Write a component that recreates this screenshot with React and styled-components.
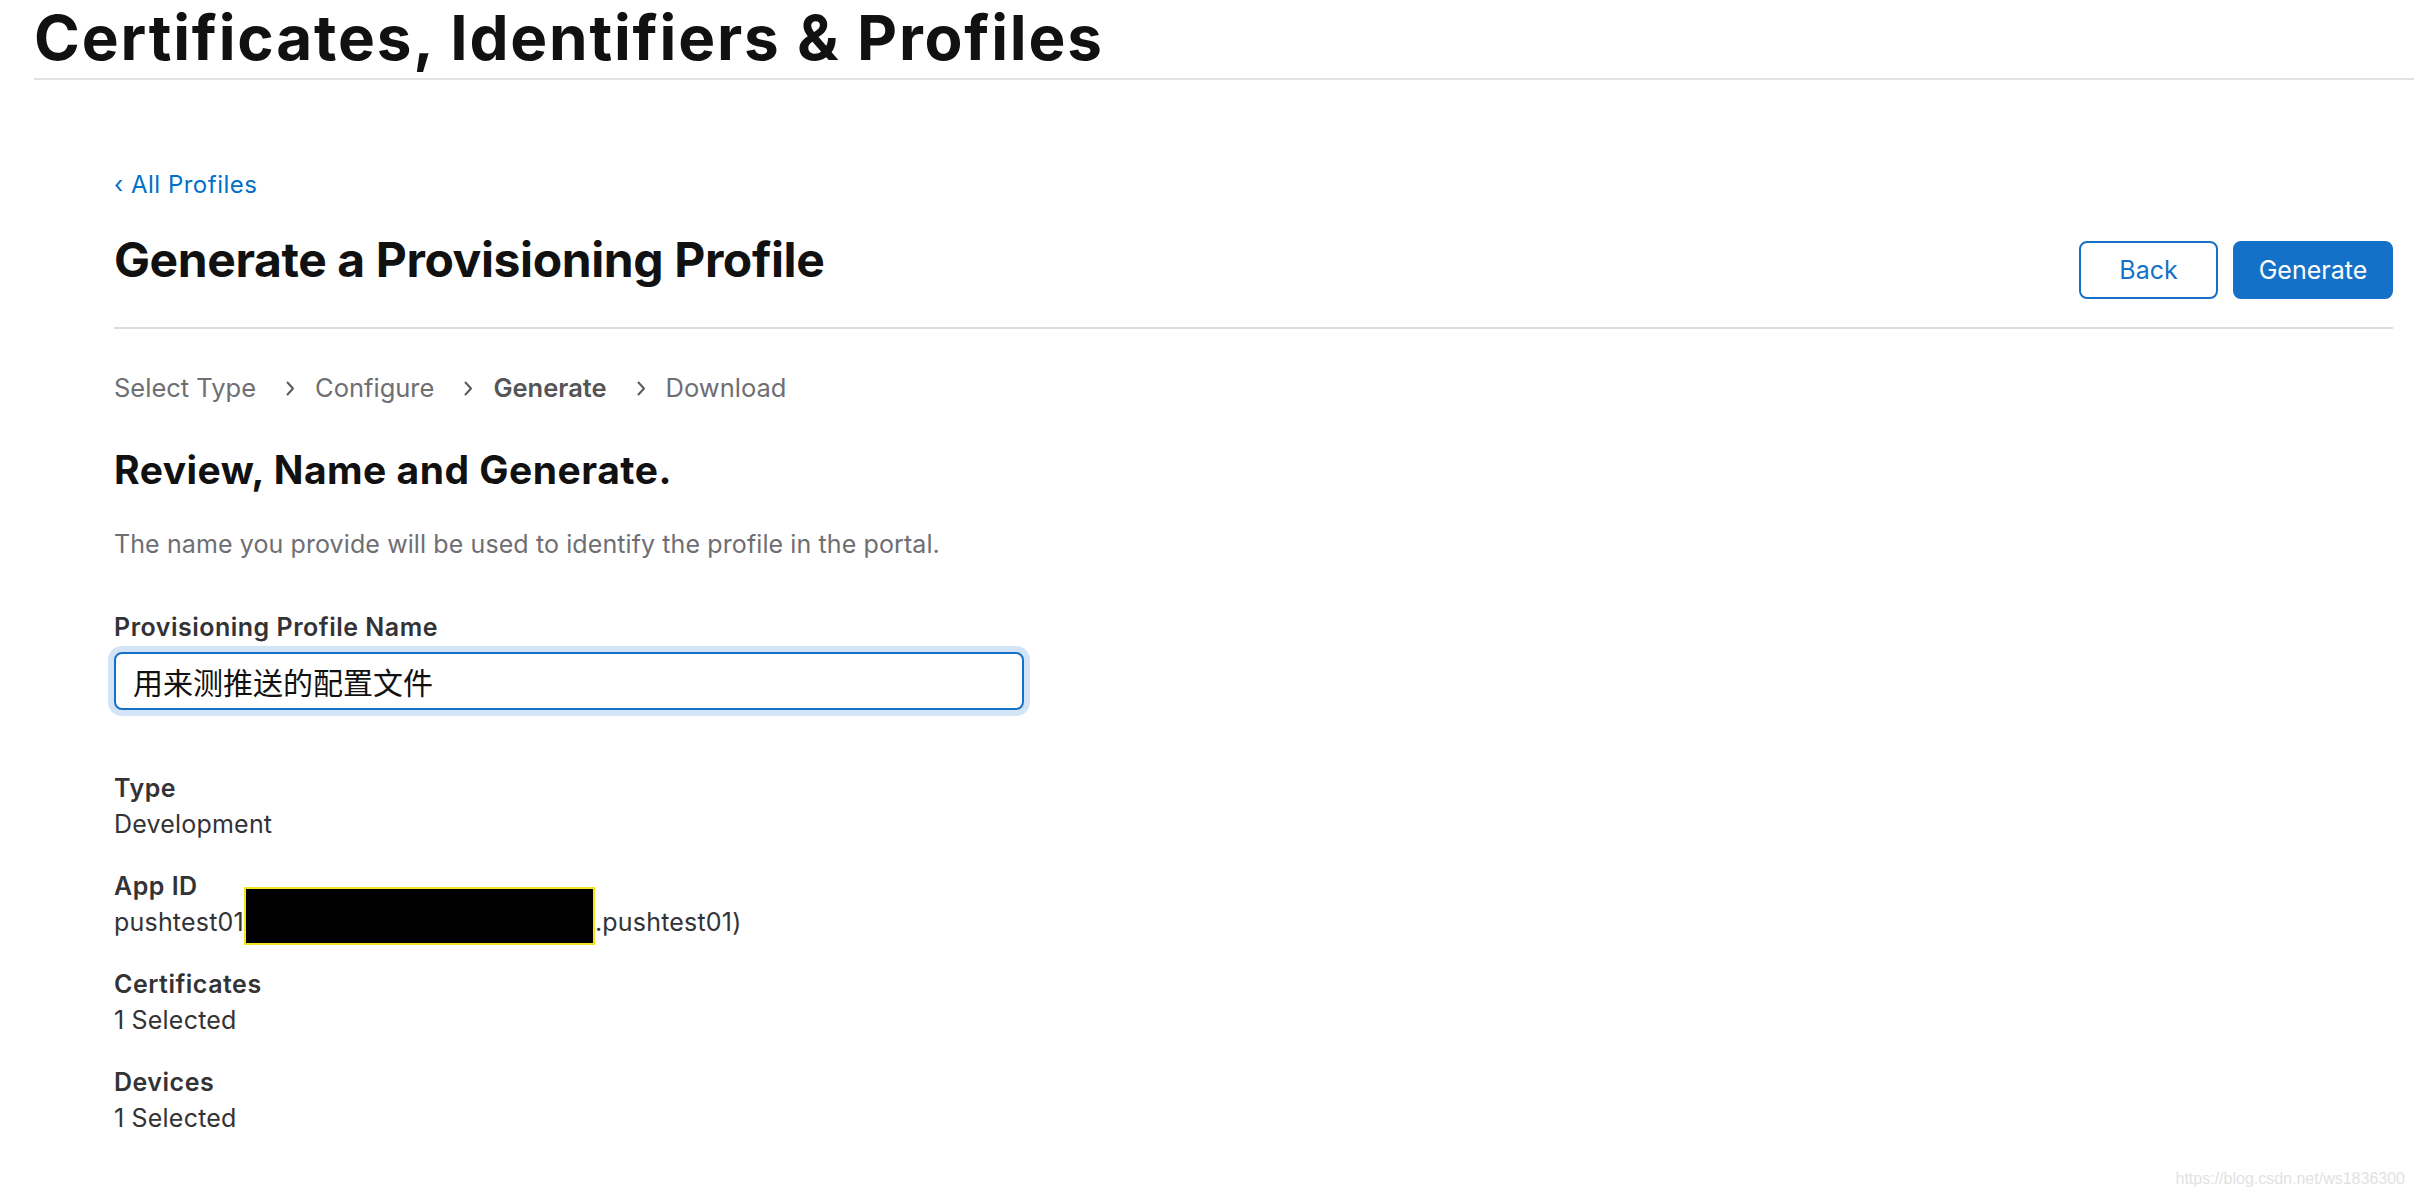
import React from "react";
import styled, { createGlobalStyle } from "styled-components";

const GlobalStyle = createGlobalStyle`
  html, body { margin: 0; padding: 0; background: #ffffff; }
  body { font-family: Inter, "Noto Sans", "Noto Sans CJK SC", sans-serif; color: #1d1d1f; }
  * { box-sizing: border-box; }
`;

const Page = styled.div`
  position: relative;
  min-height: 1196px;
  overflow: hidden;
`;

const Header = styled.header`
  margin-left: 34px;
  padding-top: 0;
  padding-bottom: 3px;
  border-bottom: 2px solid #e3e3e3;
`;

const SiteTitle = styled.h1`
  margin: 0;
  font-size: 62px;
  line-height: 75px;
  font-weight: 700;
  letter-spacing: 1.8px;
  color: #111111;
  white-space: nowrap;
`;

const Main = styled.main`
  padding: 0 21px 0 114px;
`;

const BackLink = styled.a`
  display: inline-block;
  margin-top: 91px;
  font-size: 24px;
  line-height: 28px;
  letter-spacing: 0.5px;
  color: #0070c9;
  text-decoration: none;
`;

const TitleRow = styled.div`
  display: flex;
  justify-content: space-between;
  align-items: flex-start;
  margin-top: 32px;
  padding-bottom: 28px;
  border-bottom: 2px solid #dcdcdc;
`;

const PageTitle = styled.h2`
  margin: 0;
  font-size: 48px;
  line-height: 58px;
  font-weight: 700;
  letter-spacing: -0.4px;
  color: #111111;
`;

const Actions = styled.div`
  display: flex;
  gap: 15px;
  margin-top: 10px;
`;

const Button = styled.button`
  height: 58px;
  min-width: ${(p) => (p.$primary ? "160px" : "139px")};
  padding: 0 22px;
  border-radius: 8px;
  border: 2px solid #1571c7;
  background: ${(p) => (p.$primary ? "#1571c7" : "#ffffff")};
  color: ${(p) => (p.$primary ? "#ffffff" : "#1571c7")};
  font-family: Inter, "Noto Sans", sans-serif;
  font-size: 25px;
  font-weight: 400;
  cursor: pointer;
`;

const Steps = styled.nav`
  display: flex;
  align-items: center;
  margin-top: 43px;
  font-size: 25.5px;
  line-height: 32px;
  color: #6e6e73;
`;

const Step = styled.span`
  font-weight: ${(p) => (p.$active ? 600 : 400)};
  color: ${(p) => (p.$active ? "#555558" : "#6e6e73")};
`;

const ChevronIcon = styled.svg`
  flex: none;
  margin: 0 20px 0 30px;
`;

const Chevron = () => (
  <ChevronIcon width="9" height="15" viewBox="0 0 9 15" fill="none">
    <path d="M1.5 1.5 L7 7.5 L1.5 13.5" stroke="#5a5a5e" strokeWidth="2" strokeLinecap="round" strokeLinejoin="round" />
  </ChevronIcon>
);

const SectionTitle = styled.h3`
  margin: 44px 0 0;
  font-size: 39px;
  line-height: 44px;
  font-weight: 700;
  letter-spacing: 0.5px;
  color: #111111;
`;

const Description = styled.p`
  margin: 36px 0 0;
  font-size: 25px;
  line-height: 32px;
  letter-spacing: 0.1px;
  color: #6e6e73;
`;

const FieldLabel = styled.label`
  display: block;
  margin-top: 52px;
  font-size: 25px;
  line-height: 30px;
  font-weight: 600;
  letter-spacing: 0.5px;
  color: #333336;
`;

const NameInput = styled.input`
  display: block;
  margin-top: 10px;
  width: 910px;
  height: 58px;
  padding: 0 17px;
  border: 2px solid #1571c7;
  border-radius: 8px;
  box-shadow: 0 0 0 6px #d2e4f5;
  outline: none;
  font-family: Inter, "Noto Sans CJK SC", sans-serif;
  font-size: 30px;
  color: #111111;
  background: #ffffff;
`;

const Details = styled.dl`
  margin: 60px 0 0;
  display: flex;
  flex-direction: column;
  gap: 26px;
`;

const Group = styled.div``;

const Term = styled.dt`
  font-size: 25px;
  line-height: 36px;
  font-weight: 600;
  letter-spacing: 0.5px;
  color: #333336;
`;

const Value = styled.dd`
  margin: 0;
  font-size: 25px;
  line-height: 36px;
  letter-spacing: 0.2px;
  color: #333336;
  white-space: nowrap;
`;

const Redaction = styled.span`
  display: inline-block;
  position: relative;
  top: -17px;
  vertical-align: top;
  width: 351px;
  height: 58px;
  margin-bottom: -22px;
  background: #000000;
  border: 2px solid #f4e61e;
`;

const Watermark = styled.div`
  position: absolute;
  right: 9px;
  bottom: 8px;
  font-family: "Liberation Sans", Arial, sans-serif;
  font-size: 16px;
  color: #e2e2e2;
`;

const steps = [
  { label: "Select Type" },
  { label: "Configure" },
  { label: "Generate", active: true },
  { label: "Download" },
];

export default function App() {
  return (
    <Page>
      <GlobalStyle />
      <Header>
        <SiteTitle>Certificates, Identifiers &amp; Profiles</SiteTitle>
      </Header>
      <Main>
        <BackLink href="#">‹ All Profiles</BackLink>
        <TitleRow>
          <PageTitle>Generate a Provisioning Profile</PageTitle>
          <Actions>
            <Button>Back</Button>
            <Button $primary>Generate</Button>
          </Actions>
        </TitleRow>
        <Steps>
          {steps.map((s, i) => (
            <React.Fragment key={s.label}>
              {i > 0 && <Chevron />}
              <Step $active={s.active}>{s.label}</Step>
            </React.Fragment>
          ))}
        </Steps>
        <SectionTitle>Review, Name and Generate.</SectionTitle>
        <Description>The name you provide will be used to identify the profile in the portal.</Description>
        <FieldLabel htmlFor="profile-name">Provisioning Profile Name</FieldLabel>
        <NameInput id="profile-name" defaultValue="用来测推送的配置文件" />
        <Details>
          <Group>
            <Term>Type</Term>
            <Value>Development</Value>
          </Group>
          <Group>
            <Term>App ID</Term>
            <Value>
              pushtest01<Redaction />.pushtest01)
            </Value>
          </Group>
          <Group>
            <Term>Certificates</Term>
            <Value>1 Selected</Value>
          </Group>
          <Group>
            <Term>Devices</Term>
            <Value>1 Selected</Value>
          </Group>
        </Details>
      </Main>
      <Watermark>https://blog.csdn.net/ws1836300</Watermark>
    </Page>
  );
}
